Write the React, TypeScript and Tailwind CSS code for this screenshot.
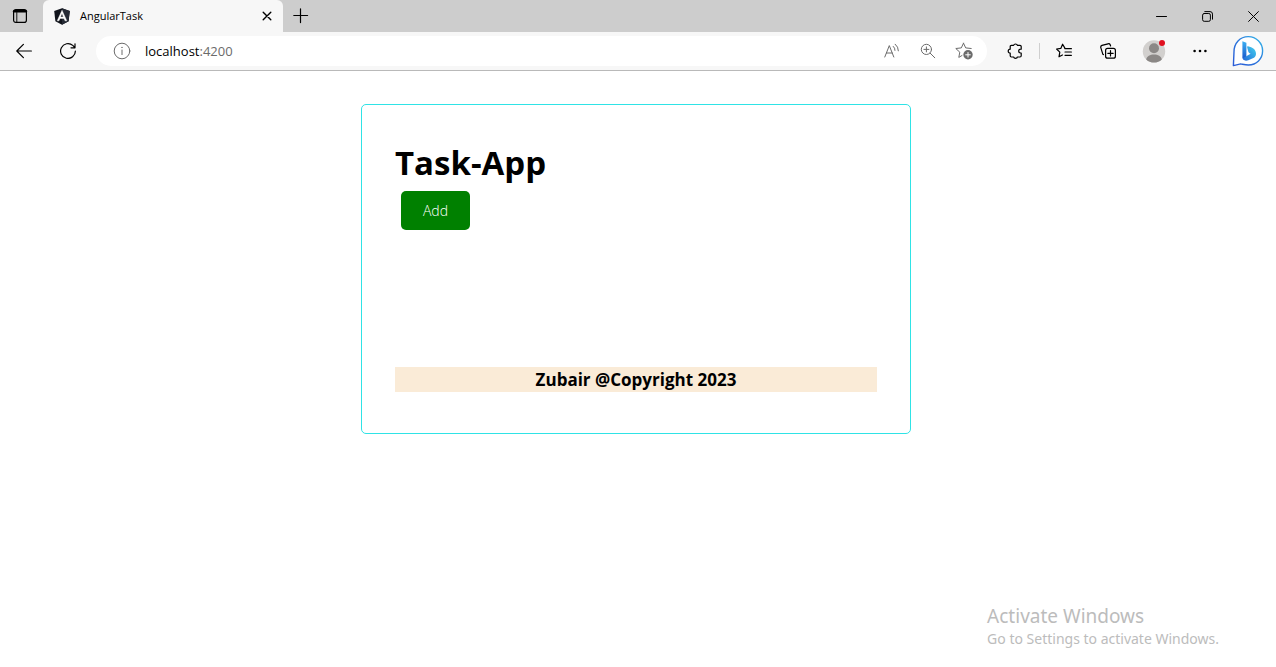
import type { ReactNode } from "react";

type IconButtonProps = { label: string; className?: string; children: ReactNode };

function IconButton({ label, className = "w-11", children }: IconButtonProps) {
  return (
    <button
      type="button"
      aria-label={label}
      className={`flex h-8 shrink-0 items-center justify-center ${className}`}
    >
      {children}
    </button>
  );
}

function Icon({ size = 16, width = 1.1, children }: { size?: number; width?: number; children: ReactNode }) {
  return (
    <svg
      width={size}
      height={size}
      viewBox={`0 0 ${size} ${size}`}
      fill="none"
      stroke="currentColor"
      strokeWidth={width}
      strokeLinecap="round"
      strokeLinejoin="round"
      aria-hidden="true"
    >
      {children}
    </svg>
  );
}

const STAR = "M8.5 1.2L10.7 5.9L16.2 6.5M8.5 1.2L6.3 5.9L.8 6.5L4.8 10.2L3.8 15.4L7 13.5";

function TabStrip() {
  return (
    <div className="flex h-8 bg-[#cdcdcd]">
      <IconButton label="Tab actions" className="w-[43px] pr-[3px]">
        <Icon width={1.2}>
          <rect x="1.6" y="1.6" width="12.8" height="12.8" rx="2.2" />
          <path d="M2.2 3.3h11.6" strokeWidth="2.6" />
          <path d="M4.8 4.5v9.7" strokeWidth=".9" />
        </Icon>
      </IconButton>
      <div className="flex w-60 items-center rounded-t-md bg-[#f7f7f7] pl-[11px]">
        <svg width="16" height="17" viewBox="0 0 16 17" aria-hidden="true">
          <path d="M8 .3L15.8 3l-1.2 10.2L8 16.8l-6.6-3.6L.2 3z" fill="#10131b" />
          <path d="M8 .3L15.8 3l-1.2 10.2L8 16.8z" fill="#252a35" />
          <path
            d="M8 2.2L3.2 12.8H5l1-2.4h4l1 2.4h1.8zm0 3.3L9.4 8.9H6.6z"
            fill="#fff"
            stroke="#fff"
            strokeWidth=".4"
            fillRule="evenodd"
          />
        </svg>
        <span className="ml-[10px] flex-1 text-[11px] leading-4">AngularTask</span>
        <IconButton label="Close tab" className="w-8">
          <Icon size={10} width={1.4}>
            <path d="M1.2 1.2l7.6 7.6M8.8 1.2L1.2 8.8" />
          </Icon>
        </IconButton>
      </div>
      <IconButton label="New tab" className="w-9">
        <Icon width={1.2}>
          <path d="M7.5 .8v13.8M.8 7.5h13.8" />
        </Icon>
      </IconButton>
      <div className="flex-1" />
      <IconButton label="Minimize" className="w-[46px]">
        <Icon size={11} width={1}>
          <path d="M.5 5.5h10" />
        </Icon>
      </IconButton>
      <IconButton label="Restore" className="w-[46px]">
        <Icon size={11} width={1}>
          <rect x=".6" y="2.5" width="7.8" height="7.8" rx="1.6" />
          <path d="M2.8 .6h5.2a2.5 2.5 0 0 1 2.5 2.5v5.1" />
        </Icon>
      </IconButton>
      <IconButton label="Close" className="w-[46px]">
        <Icon size={11} width={1}>
          <path d="M.6 .6l9.8 9.8M10.4 .6L.6 10.4" />
        </Icon>
      </IconButton>
    </div>
  );
}

function AddressBar() {
  return (
    <div className="ml-[6px] flex h-[30px] flex-1 items-center rounded-full bg-white pr-[5px] pl-[17px] text-[#6b6b6b]">
      <Icon size={18} width={1}>
        <circle cx="9" cy="9" r="7.8" />
        <path d="M9 8v4.6" />
        <circle cx="9" cy="5.6" r=".5" fill="currentColor" stroke="none" />
        <path d="M9 5.3v.3" />
      </Icon>
      <div className="ml-[14px] flex-1 text-[13px] leading-4">
        <span className="text-black">localhost</span>:4200
      </div>
      <IconButton label="Read aloud" className="w-9">
        <Icon width={1}>
          <path d="M.8 14L5.3 2.6L9.8 14M2.4 10h5.8" />
          <path d="M9.3 3.4q1.8 1.6 1.7 4M11.2 1.2q3.2 2.6 3.2 6.6" />
        </Icon>
      </IconButton>
      <IconButton label="Zoom" className="w-9">
        <Icon width={1}>
          <circle cx="6.4" cy="6.4" r="5.1" />
          <path d="M10.2 10.2L14.8 14.8M6.4 3.9v5M3.9 6.4h5" />
        </Icon>
      </IconButton>
      <IconButton label="Add to favorites" className="w-9">
        <Icon size={18} width={1}>
          <path d={STAR} />
          <circle cx="13" cy="12.8" r="4.7" fill="currentColor" stroke="none" />
          <path d="M13 10.5v4.6M10.7 12.8h4.6" stroke="#fff" />
        </Icon>
      </IconButton>
    </div>
  );
}

function BingLogo() {
  return (
    <svg width="32" height="32" viewBox="0 0 32 32" aria-hidden="true">
      <defs>
        <linearGradient id="ring" x1="0" y1="1" x2="1" y2="0">
          <stop offset="0" stopColor="#2a5bd7" />
          <stop offset=".55" stopColor="#2b78dc" />
          <stop offset="1" stopColor="#35bdeb" />
        </linearGradient>
        <linearGradient id="stem" x1="0" y1="0" x2="0" y2="1">
          <stop offset="0" stopColor="#3cb1f2" />
          <stop offset="1" stopColor="#1750c8" />
        </linearGradient>
        <linearGradient id="bowl" x1="0" y1="1" x2="1" y2="0">
          <stop offset="0" stopColor="#2469d8" />
          <stop offset="1" stopColor="#42d1ee" />
        </linearGradient>
      </defs>
      <path
        d="M1.4 30.6L2 16.8C2 8 8 1.6 16.2 1.6A14.2 14.2 0 0 1 30.6 15.8C30.6 24 24.4 30 16.4 30C13.4 30 11 29.3 8.8 28.9z"
        fill="#fff"
        stroke="url(#ring)"
        strokeWidth="1.4"
        strokeLinejoin="round"
      />
      <path d="M10.4 6.2l4 1.5v13l-1.2 4.6c-1.8-.5-2.8-1.5-2.8-3z" fill="url(#stem)" />
      <path
        d="M16 11.2c4.6.9 8 3.4 8 7.6 0 1.8-.7 3.1-2 4l-5.7 2.5c-2.5.9-4.8.2-5.6-2l7.9-4.5-1.3-.9c-.7-.5-.9-.9-1.1-1.7l-1-3.6c-.2-.9.1-1.4.8-1.4z"
        fill="url(#bowl)"
      />
    </svg>
  );
}

function Toolbar() {
  return (
    <div className="flex h-[39px] items-center border-b border-[#b9b9b9] bg-[#f7f7f7] pr-[3px] pl-[2px]">
      <IconButton label="Back">
        <Icon width={1.2}>
          <path d="M15.4 8H.8M7.4 1.4L.8 8l6.6 6.6" />
        </Icon>
      </IconButton>
      <IconButton label="Refresh">
        <Icon width={1.2}>
          <path d="M15.4 8A7.4 7.4 0 1 1 12.8 2.4L14.9 4.6M15 .8v4h-4" />
        </Icon>
      </IconButton>
      <AddressBar />
      <IconButton label="Extensions" className="ml-[6px] w-11">
        <Icon width={1.2}>
          <path d="M4.4 2.4H6.6A2 2 0 0 1 10.4 2.4H13Q14.2 2.4 14.2 3.6V6.2H13.6A1.9 1.9 0 0 0 13.6 10H14.2V12.8Q14.2 14 13 14H10.4A2 2 0 0 1 6.6 14H4.4Q3.2 14 3.2 12.8V10.2A2 2 0 0 1 3.2 6.2V3.6Q3.2 2.4 4.4 2.4" />
        </Icon>
      </IconButton>
      <div className="mx-[2px] h-4 w-px bg-[#cfcfcf]" />
      <IconButton label="Favorites">
        <Icon width={1.2}>
          <path d="M8.6 4.6L6.6 1.2L4.8 5.4L.6 6L3.8 9.2L3 13.8L6.4 12M8.6 4.6L9 5.4" />
          <path d="M9 5.7h6.4M9 9h6.4M9 12.3h6.4" />
        </Icon>
      </IconButton>
      <IconButton label="Collections" className="mr-px w-11">
        <Icon width={1.2}>
          <rect x="5.6" y="5.4" width="9.8" height="9.8" rx="2" />
          <path d="M10.5 7.6v5.4M7.8 10.3h5.4M3.4 11.6L2.8 11.2L.8 4.6Q.4 3 2 2.4L8 .8Q9.6 .4 10.2 1.8L10.6 3" />
        </Icon>
      </IconButton>
      <IconButton label="Profile" className="w-[46px]">
        <svg width="24" height="24" viewBox="0 0 24 24" aria-hidden="true">
          <circle cx="12" cy="12.4" r="11.2" fill="#d2d0ce" />
          <circle cx="12" cy="9.2" r="5" fill="#8b8886" />
          <path d="M4.2 20.4C4.8 17 8 15.4 12 15.4s7.2 1.6 7.8 5A11.2 11.2 0 0 1 4.2 20.4z" fill="#8b8886" />
          <circle cx="20" cy="4" r="3" fill="#e0101f" />
        </svg>
      </IconButton>
      <IconButton label="Settings and more" className="w-[46px]">
        <svg width="14" height="4" viewBox="0 0 14 4" aria-hidden="true">
          <circle cx="1.6" cy="2" r="1.3" />
          <circle cx="7" cy="2" r="1.3" />
          <circle cx="12.4" cy="2" r="1.3" />
        </svg>
      </IconButton>
      <IconButton label="Bing chat" className="w-[50px]">
        <BingLogo />
      </IconButton>
    </div>
  );
}

export default function App() {
  return (
    <div className="relative flex min-h-screen flex-col bg-white font-['Open_Sans','Noto_Sans',sans-serif] text-black">
      <header>
        <TabStrip />
        <Toolbar />
      </header>
      <main className="flex flex-1 items-start justify-center pt-[33px] pr-1">
        <div className="flex min-h-[330px] w-full max-w-[550px] flex-col rounded-[5px] border border-[#2fe3e6] px-[33px] pt-[33px] pb-[41px]">
          <h1 className="mb-1 text-[33px] leading-[49px] font-bold">Task-App</h1>
          <button
            type="button"
            className="ml-[6px] h-[39px] w-[69px] rounded-[5px] bg-[#008000] text-[14px] font-light text-white"
          >
            Add
          </button>
          <footer className="mt-auto bg-[#faebd7] text-center text-[17px] leading-[25px] font-bold">
            Zubair @Copyright 2023
          </footer>
        </div>
      </main>
      <aside className="absolute right-[57px] bottom-[17px] font-['Noto_Sans',sans-serif] text-[#bcbcbc]">
        <p className="text-[19px] leading-6">Activate Windows</p>
        <p className="text-[14px] leading-[22px]">Go to Settings to activate Windows.</p>
      </aside>
    </div>
  );
}
